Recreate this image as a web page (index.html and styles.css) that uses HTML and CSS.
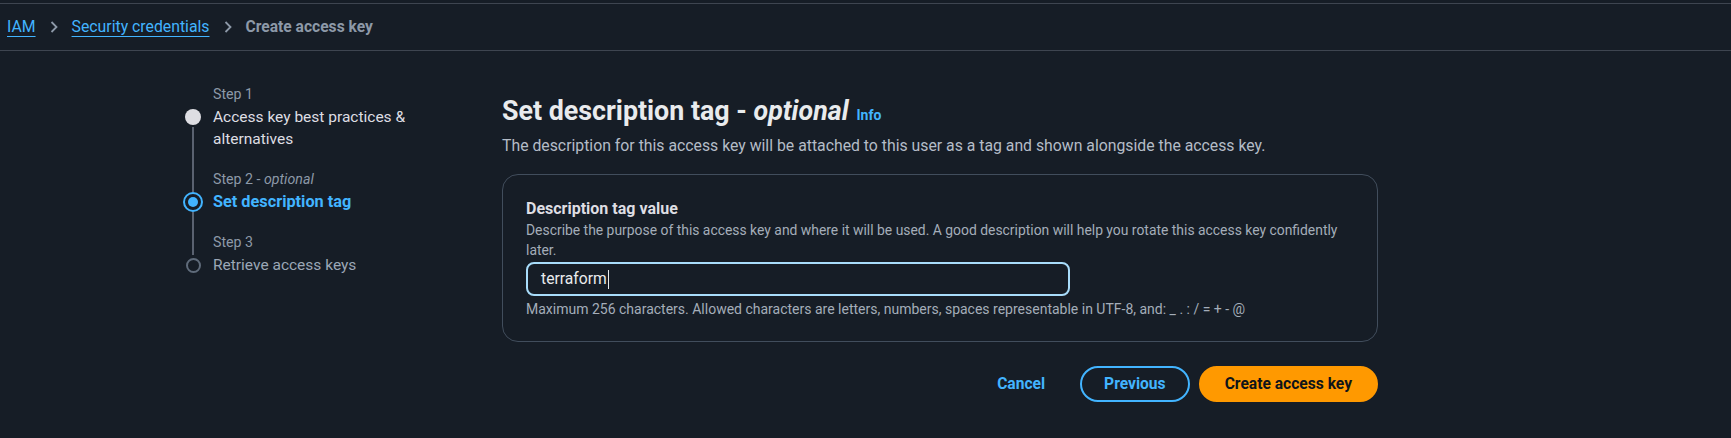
FILE: index.html
```html
<!DOCTYPE html>
<html lang="en">
<head>
<meta charset="utf-8">
<title>Create access key</title>
<link rel="stylesheet" href="styles.css">
</head>
<body>
<div class="topspace"></div>
<nav class="breadcrumbs">
  <a class="crumb-link" href="#">IAM</a>
  <svg class="chev" width="8" height="12" viewBox="0 0 8 12"><path d="M1.5 1l5 5-5 5" fill="none" stroke="currentColor" stroke-width="1.8"/></svg>
  <a class="crumb-link" href="#">Security credentials</a>
  <svg class="chev" width="8" height="12" viewBox="0 0 8 12"><path d="M1.5 1l5 5-5 5" fill="none" stroke="currentColor" stroke-width="1.8"/></svg>
  <span class="crumb-current">Create access key</span>
</nav>
<main class="layout">
  <nav class="steps">
    <div class="step">
      <div class="rail"><span class="seg seg-top seg-hidden"></span><span class="marker"><span class="dot-done"></span></span><span class="seg seg-bottom"></span></div>
      <div class="step-body">
        <div class="step-label">Step 1</div>
        <div class="step-title title-done">Access key best practices &amp; alternatives</div>
      </div>
    </div>
    <div class="step">
      <div class="rail"><span class="seg seg-top"></span><span class="marker"><span class="dot-active"><span class="dot-inner"></span></span></span><span class="seg seg-bottom"></span></div>
      <div class="step-body">
        <div class="step-label">Step 2 - <i>optional</i></div>
        <div class="step-title title-active">Set description tag</div>
      </div>
    </div>
    <div class="step step-last">
      <div class="rail"><span class="seg seg-top"></span><span class="marker"><span class="dot-todo"></span></span></div>
      <div class="step-body">
        <div class="step-label">Step 3</div>
        <div class="step-title title-todo">Retrieve access keys</div>
      </div>
    </div>
  </nav>
  <section class="content">
    <h1 class="page-title"><span class="title-text">Set description tag - <i>optional</i></span><a class="info" href="#">Info</a></h1>
    <p class="page-desc">The description for this access key will be attached to this user as a tag and shown alongside the access key.</p>
    <div class="container">
      <div class="field-label">Description tag value</div>
      <div class="field-desc">Describe the purpose of this access key and where it will be used. A good description will help you rotate this access key confidently later.</div>
      <div class="input"><span class="input-text">terraform</span><span class="caret"></span></div>
      <div class="field-constraint">Maximum 256 characters. Allowed characters are letters, numbers, spaces representable in UTF-8, and: _ . : / = + - @</div>
    </div>
    <div class="actions">
      <button class="btn btn-link">Cancel</button>
      <button class="btn btn-normal">Previous</button>
      <button class="btn btn-primary">Create access key</button>
    </div>
  </section>
</main>
</body>
</html>
```
FILE: styles.css
```css
html, body {
  margin: 0;
  background: #161d26;
}
body {
  font-family: Roboto, "Liberation Sans", sans-serif;
  color: #dedee3;
  font-size: 15px;
  line-height: 20px;
}
.topspace {
  height: 3px;
}
.breadcrumbs {
  height: 46px;
  border-top: 1px solid #3e4550;
  border-bottom: 1px solid #3e4550;
  display: flex;
  align-items: center;
  gap: 14px;
  padding-left: 7px;
  font-size: 15.8px;
}
.crumb-link {
  color: #42b4ff;
  text-decoration: underline;
  text-underline-offset: 4px;
}
.chev {
  color: #8d99a8;
}
.crumb-current {
  color: #8d99a8;
  font-weight: 700;
  font-size: 15.6px;
}
.layout {
  display: flex;
  align-items: flex-start;
  padding-left: 183px;
  gap: 79px;
}
.steps {
  width: 240px;
  padding-top: 33px;
}
.step {
  display: grid;
  grid-template-columns: 20px 1fr;
  column-gap: 10px;
}
.rail {
  display: flex;
  flex-direction: column;
  align-items: center;
}
.seg {
  width: 2px;
  background: #5a6270;
}
.seg-top {
  height: 23px;
  flex-shrink: 0;
}
.seg-hidden {
  background: transparent;
}
.seg-bottom {
  flex: 1;
}
.marker {
  width: 20px;
  height: 20px;
  flex-shrink: 0;
  display: flex;
  align-items: center;
  justify-content: center;
}
.dot-done {
  width: 16px;
  height: 16px;
  border-radius: 50%;
  background: #dedee3;
}
.dot-active {
  width: 20px;
  height: 20px;
  box-sizing: border-box;
  border: 2px solid #42b4ff;
  border-radius: 50%;
  display: flex;
  align-items: center;
  justify-content: center;
}
.dot-inner {
  width: 10px;
  height: 10px;
  border-radius: 50%;
  background: #42b4ff;
}
.dot-todo {
  width: 15px;
  height: 15px;
  box-sizing: border-box;
  border: 2px solid #5f6b7a;
  border-radius: 50%;
}
.step-body {
  padding-bottom: 19px;
}
.step-last .step-body {
  padding-bottom: 0;
}
.step-label {
  font-size: 14.2px;
  line-height: 20px;
  color: #8d99a8;
}
.step-title {
  margin-top: 2px;
  font-size: 15.5px;
  line-height: 22px;
}
.title-done {
  color: #dedee3;
}
.title-active {
  color: #42b4ff;
  font-weight: 700;
  font-size: 16.3px;
}
.title-todo {
  color: #9ba7b6;
}
.content {
  width: 876px;
  padding-top: 45px;
}
.page-title {
  margin: 0;
  display: flex;
  align-items: baseline;
  gap: 8px;
  font-size: 26.8px;
  line-height: 30px;
  font-weight: 700;
  color: #e9ebed;
}
.info {
  font-size: 14px;
  line-height: 16px;
  font-weight: 700;
  color: #42b4ff;
  text-decoration: none;
}
.page-desc {
  margin: 9px 0 0;
  font-size: 15.8px;
  line-height: 22px;
  color: #b4bcc7;
}
.container {
  margin-top: 17px;
  border: 1px solid #414d5c;
  border-radius: 16px;
  padding: 23px 23px 23px;
}
.field-label {
  font-size: 16px;
  line-height: 22px;
  font-weight: 700;
  color: #dedee3;
}
.field-desc {
  font-size: 13.9px;
  line-height: 20px;
  color: #a4adb9;
}
.input {
  margin-top: 2px;
  width: 544px;
  height: 34px;
  box-sizing: border-box;
  border: 2px solid #a8dcfa;
  border-radius: 8px;
  display: flex;
  align-items: center;
  padding-left: 13px;
  font-size: 15.7px;
  color: #e9ebed;
}
.caret {
  width: 1px;
  height: 19px;
  background: #e9ebed;
  margin-left: 1px;
}
.field-constraint {
  margin-top: 4px;
  font-size: 14px;
  line-height: 18px;
  color: #a4adb9;
}
.actions {
  margin-top: 24px;
  display: flex;
  justify-content: flex-end;
  gap: 9px;
}
.btn {
  height: 36px;
  box-sizing: border-box;
  border-radius: 20px;
  font-family: inherit;
  font-size: 15.6px;
  font-weight: 700;
  cursor: pointer;
}
.btn-link {
  background: transparent;
  border: 2px solid transparent;
  color: #42b4ff;
  padding: 0 20px;
  margin-right: 4px;
}
.btn-normal {
  background: transparent;
  border: 2px solid #42b4ff;
  color: #42b4ff;
  padding: 0 22px;
}
.btn-primary {
  background: #ff9900;
  border: 2px solid #ff9900;
  color: #0f141a;
  padding: 0 24px;
}
```
